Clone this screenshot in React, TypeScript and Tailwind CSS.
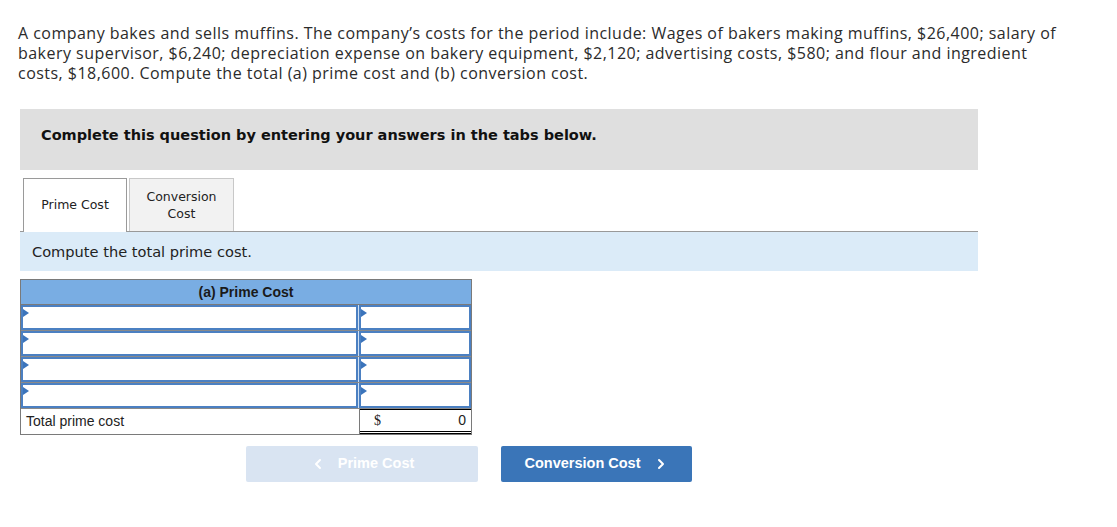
import { ChevronLeft, ChevronRight } from "lucide-react";

const para = "A company bakes and sells muffins. The company’s costs for the period include: Wages of bakers making muffins, $26,400; salary of bakery supervisor, $6,240; depreciation expense on bakery equipment, $2,120; advertising costs, $580; and flour and ingredient costs, $18,600. Compute the total (a) prime cost and (b) conversion cost.";

function InputCell({ wide }: { wide?: boolean }) {
  return (
    <div className={`relative h-[25px] border-2 border-[#4b80c2] bg-white ${wide ? "flex-1" : "w-[112px]"}`}>
      <span className="absolute left-0 top-[2px] h-0 w-0 border-y-[4px] border-l-[6px] border-y-transparent border-l-[#3b74bb]" />
    </div>
  );
}

function InputRow() {
  return (
    <div className="flex gap-[1px] border-b border-[#8a8a8a] bg-[#cfe0f3]">
      <InputCell wide />
      <InputCell />
    </div>
  );
}

export default function App() {
  return (
    <div className="min-h-[527px] w-[1117px] bg-white pt-[23px] text-[#333]">
      <p className="w-[1066px] pl-[18px] text-[16px] leading-[20px] tracking-[0.47px] text-[#2b2b2b]" style={{ fontFamily: '"Open Sans", sans-serif' }}>
        {para}
      </p>

      <div className="ml-[20px] mt-[26px] h-[61px] w-[958px] bg-[#dfdfdf] pl-[21px] pt-[13px]">
        <span className="text-[14.5px] font-bold leading-[20px] text-[#111]" style={{ fontFamily: '"DejaVu Sans", Verdana, sans-serif' }}>
          Complete this question by entering your answers in the tabs below.
        </span>
      </div>

      <div className="ml-[20px] mt-[8px] w-[958px]" style={{ fontFamily: '"DejaVu Sans", Verdana, sans-serif' }}>
        <div className="flex gap-[2px] pl-[3px]">
          <div className="relative z-10 -mb-[1px] flex h-[54px] w-[104px] items-center justify-center border border-b-0 border-[#9a9a9a] bg-white text-[12.5px] text-[#222]">
            Prime Cost
          </div>
          <div className="flex h-[53px] w-[105px] items-center justify-center border border-b-0 border-[#c8c8c8] bg-[#f2f2f2] text-center text-[12.5px] leading-[17px] text-[#222]">
            Conversion
            <br />
            Cost
          </div>
        </div>
        <div className="flex h-[40px] items-center border-t border-[#999] bg-[#dbebf8] pl-[12px] text-[14.6px] text-[#222]">
          Compute the total prime cost.
        </div>
      </div>

      <div className="ml-[20px] mt-[8px] w-[452px] border border-[#7a7a7a]" style={{ fontFamily: '"Liberation Sans", Arial, sans-serif' }}>
        <div className="flex h-[25px] items-center justify-center border-b border-[#7a7a7a] bg-[#79ade3] text-[14px] font-bold text-[#1a1a1a]">
          (a) Prime Cost
        </div>
        <InputRow />
        <InputRow />
        <InputRow />
        <InputRow />
        <div className="flex h-[25px] text-[14px] text-[#222]">
          <div className="flex flex-1 items-center border-r border-[#7a7a7a] pl-[5px]">Total prime cost</div>
          <div className="flex w-[111px] items-center justify-between border-t border-b-[3px] border-double border-t-black border-b-black px-[5px] pl-[14px]">
            <span style={{ fontFamily: '"Liberation Serif", serif' }}>$</span>
            <span>0</span>
          </div>
        </div>
      </div>

      <div className="ml-[246px] mt-[11px] flex gap-[23px]" style={{ fontFamily: '"Liberation Sans", Arial, sans-serif' }}>
        <button className="flex h-[36px] w-[232px] items-center justify-center gap-[12px] rounded-[2px] bg-[#d9e4f2] text-[14.5px] font-bold text-white">
          <ChevronLeft size={16} strokeWidth={3} />
          Prime Cost
        </button>
        <button className="flex h-[36px] w-[191px] items-center justify-center gap-[12px] rounded-[2px] bg-[#3a75b8] text-[14.5px] font-bold text-white">
          Conversion Cost
          <ChevronRight size={16} strokeWidth={3} />
        </button>
      </div>
    </div>
  );
}
